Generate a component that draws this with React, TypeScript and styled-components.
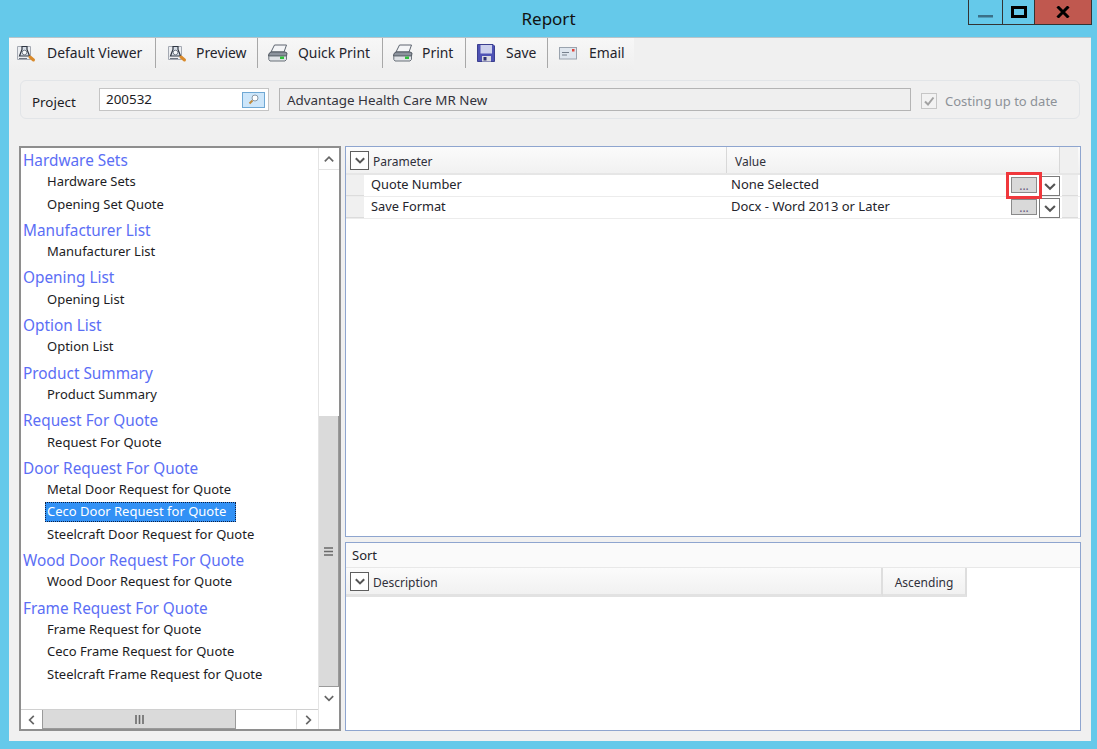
import React from "react";
import styled, { createGlobalStyle } from "styled-components";

const GlobalStyle = createGlobalStyle`
  html, body {
    margin: 0;
    padding: 0;
    background: #65c9ea;
  }
  * {
    box-sizing: border-box;
  }
`;

const Page = styled.div`
  width: 1097px;
  height: 749px;
  display: flex;
  flex-direction: column;
  font-family: "Noto Sans", "Open Sans", sans-serif;
  font-size: 13px;
  color: #1c1c24;
  overflow: hidden;
`;

const TitleBar = styled.div`
  position: relative;
  height: 37px;
  flex: none;
  text-align: center;
  font-size: 17px;
  line-height: 38px;
  color: #111;
`;

const WindowControls = styled.div`
  position: absolute;
  top: 0;
  left: 968px;
  width: 124px;
  height: 25px;
  display: flex;
  border: 1px solid #333;
  border-top: 0;
`;

const ControlButton = styled.div<{ $w: number; $close?: boolean }>`
  width: ${(p) => p.$w}px;
  flex: none;
  display: flex;
  align-items: center;
  justify-content: center;
  background: ${(p) => (p.$close ? "#c0584f" : "transparent")};
  & + & {
    border-left: 1px solid #333;
  }
`;

const Window = styled.div`
  width: 1082px;
  height: 704px;
  margin-left: 9px;
  flex: none;
  background: #f0f0f0;
  border-top: 1px solid #b9c4c9;
  display: flex;
  flex-direction: column;
`;

const Toolbar = styled.div`
  width: 625px;
  height: 32px;
  flex: none;
  display: flex;
  align-items: stretch;
  padding-bottom: 2px;
  background: linear-gradient(#f7f7f7, #efefef);
`;

const ToolButton = styled.div<{ $w: number; $pad: number }>`
  width: ${(p) => p.$w}px;
  flex: none;
  display: flex;
  align-items: center;
  padding-left: ${(p) => p.$pad}px;
  padding-bottom: 1px;
  font-size: 13.9px;
  color: #24242c;
  border-right: 1px solid #a8a8a8;
  &:last-child {
    border-right: 0;
  }
`;

const ToolIcon = styled.span<{ $gap: number }>`
  display: flex;
  margin-right: ${(p) => p.$gap}px;
`;

const ProjectGroup = styled.div`
  height: 39px;
  margin: 10px 11px 0 11px;
  flex: none;
  display: flex;
  align-items: center;
  padding: 0 0 0 11px;
  border: 1px solid #e2e5e8;
  border-radius: 6px;
  font-size: 13.4px;
`;

const ProjectLabel = styled.span`
  width: 67px;
  flex: none;
  padding-top: 4px;
`;

const ProjectInput = styled.div`
  width: 170px;
  height: 23px;
  flex: none;
  display: flex;
  align-items: center;
  justify-content: space-between;
  padding: 0 3px 1px 6px;
  background: #fff;
  border: 1px solid #c4c4c4;
`;

const SearchButton = styled.div`
  width: 23px;
  height: 16px;
  margin-top: 1px;
  display: flex;
  align-items: center;
  justify-content: center;
  background: #cde6fa;
  border: 1px solid #6fa8d4;
`;

const ProjectName = styled.div`
  width: 632px;
  height: 23px;
  margin-left: 10px;
  flex: none;
  padding-left: 7px;
  line-height: 22px;
  background: #efefef;
  border: 1px solid #b4b4b4;
  color: #33333c;
`;

const Costing = styled.div`
  margin-left: 10px;
  display: flex;
  align-items: center;
  gap: 8px;
  padding-top: 2px;
  font-size: 13px;
  color: #8d9298;
`;

const CheckBox = styled.span`
  width: 16px;
  height: 16px;
  display: flex;
  align-items: center;
  justify-content: center;
  background: #f2f2f2;
  border: 1px solid #c6c6c6;
`;

const Body = styled.div`
  height: 585px;
  margin: 27px 10px 0 10px;
  flex: none;
  display: flex;
  gap: 4px;
`;

const ListPanel = styled.div`
  width: 322px;
  flex: none;
  display: grid;
  grid-template-columns: 297px 21px;
  grid-template-rows: 561px 20px;
  border: 2px solid #8e8e8e;
  background: #fff;
`;

const ReportList = styled.div`
  padding-left: 2px;
  overflow: hidden;
`;

const GroupTitle = styled.div`
  height: 25.3px;
  line-height: 25px;
  font-size: 15.35px;
  color: #5b6ef5;
`;

const ReportItem = styled.div`
  height: 22.3px;
  margin-left: 21.5px;
`;

const ItemLabel = styled.div<{ $selected?: boolean }>`
  width: ${(p) => (p.$selected ? "191px" : "auto")};
  height: 20px;
  position: relative;
  top: -1px;
  padding-left: 2.5px;
  line-height: 19px;
  color: ${(p) => (p.$selected ? "#fff" : "#1c1c24")};
  background: ${(p) => (p.$selected ? "#3291f5" : "transparent")};
  outline: ${(p) => (p.$selected ? "1px dotted #102040" : "none")};
  outline-offset: -1px;
`;

const VScroll = styled.div`
  display: flex;
  flex-direction: column;
  background: #fff;
  border-left: 1px solid #e4e4e4;
`;

const ScrollArrow = styled.div`
  height: 21px;
  flex: none;
  display: flex;
  align-items: center;
  justify-content: center;
`;

const VTrack = styled.div`
  height: 247px;
  flex: none;
  border-top: 1px solid #e4e4e4;
`;

const VThumb = styled.div`
  height: 271px;
  flex: none;
  display: flex;
  align-items: center;
  justify-content: center;
  background: #dadada;
  border-bottom: 1px solid #9a9a9a;
  border-right: 1px solid #9a9a9a;
`;

const HScroll = styled.div`
  display: flex;
  align-items: stretch;
  border-top: 1px solid #d0d0d0;
`;

const HArrow = styled.div`
  width: 21px;
  flex: none;
  display: flex;
  align-items: center;
  justify-content: center;
`;

const HThumb = styled.div`
  width: 194px;
  flex: none;
  display: flex;
  align-items: center;
  justify-content: center;
  background: #dadada;
  border-left: 1px solid #9a9a9a;
  border-right: 1px solid #9a9a9a;
  border-bottom: 1px solid #9a9a9a;
`;

const HTrack = styled.div`
  flex: 1;
  border-right: 1px solid #e0e0e0;
`;

const ScrollCorner = styled.div`
  background: #fff;
  border-left: 1px solid #e4e4e4;
`;

const RightColumn = styled.div`
  flex: 1;
  display: flex;
  flex-direction: column;
  gap: 5px;
  min-width: 0;
`;

const ParamGrid = styled.div`
  height: 391px;
  flex: none;
  background: #fff;
  border: 1px solid #8ea5cf;
`;

const HeaderRow = styled.div`
  height: 28px;
  display: flex;
  background: linear-gradient(#fbfbfb, #f1f1f1);
  border-bottom: 2px solid #e6e6e6;
`;

const HeaderCell = styled.div<{ $w: number }>`
  width: ${(p) => p.$w}px;
  flex: none;
  display: flex;
  align-items: center;
  font-size: 12px;
  padding: 2px 0 0 4px;
  gap: 4px;
  border-right: 1px solid #d8d8d8;
  color: #30303a;
`;

const ValueHeader = styled(HeaderCell)`
  padding-left: 8px;
`;

const FilterBox = styled.span`
  width: 19px;
  height: 19px;
  margin-top: -2px;
  flex: none;
  display: flex;
  align-items: center;
  justify-content: center;
  background: #fff;
  border: 1px solid #5e5e5e;
`;

const HeaderEnd = styled.div`
  flex: 1;
  margin-right: 2px;
  background: #f0f0f0;
`;

const ParamRow = styled.div`
  height: 22px;
  display: flex;
  align-items: flex-start;
  border-bottom: 1px solid #ececec;
  line-height: 19px;
`;

const RowHandle = styled.span`
  width: 18px;
  height: 100%;
  flex: none;
  background: #f0f0f0;
  border-bottom: 1px solid #dcdcdc;
`;

const ParamName = styled.span`
  width: 366px;
  flex: none;
  padding-left: 7px;
  font-size: 12.8px;
  color: #24242c;
`;

const ParamValue = styled.span`
  width: 281px;
  flex: none;
  padding-left: 1px;
  font-size: 13px;
  color: #24242c;
`;

const EllipsisCell = styled.span<{ $marked?: boolean }>`
  position: relative;
  width: 26px;
  height: 16px;
  margin-top: 2px;
  flex: none;
  display: flex;
  align-items: flex-end;
  justify-content: center;
  font-size: 12px;
  line-height: 12px;
  color: #6a5a80;
  background: #d9d9d9;
  border: 1px solid #8a8a8a;
  ${(p) =>
    p.$marked &&
    `&::after {
      content: "";
      position: absolute;
      left: -6px;
      top: -6px;
      width: 30px;
      height: 21px;
      border: 3px solid #f0383c;
    }`}
`;

const DropButton = styled.span`
  width: 21px;
  height: 20px;
  margin: 1px 0 0 2px;
  flex: none;
  display: flex;
  align-items: center;
  justify-content: center;
  background: #fff;
  border: 1px solid #7a7a7a;
`;

const RowEnd = styled.span`
  flex: 1;
  height: 100%;
  margin: 0 2px;
  background: #f0f0f0;
  border-bottom: 1px solid #dcdcdc;
`;

const SortPanel = styled.div`
  flex: 1;
  background: #fff;
  border: 1px solid #8ea5cf;
`;

const SortTitle = styled.div`
  height: 25px;
  padding-left: 6px;
  line-height: 24px;
  font-size: 13px;
  background: #fafafa;
  border-bottom: 1px solid #e8e8e8;
  color: #24242c;
`;

const SortHeader = styled.div`
  height: 29px;
  display: flex;
`;

const SortCell = styled.div<{ $w: number; $center?: boolean }>`
  width: ${(p) => p.$w}px;
  flex: none;
  display: flex;
  align-items: center;
  justify-content: ${(p) => (p.$center ? "center" : "flex-start")};
  gap: 4px;
  padding-top: 2px;
  padding-left: ${(p) => (p.$center ? 0 : 4)}px;
  font-size: 12px;
  color: #30303a;
  background: linear-gradient(#fbfbfb, #f1f1f1);
  border-right: 2px solid #dedede;
  border-bottom: 3px solid #e2e2e2;
`;

const Chevron = ({ dir, size = 12, color = "#666", width = 1.4 }: { dir: "up" | "down" | "left" | "right"; size?: number; color?: string; width?: number }) => {
  const pts = {
    up: "1.5,7 5,3.5 8.5,7",
    down: "1.5,3.5 5,7 8.5,3.5",
    left: "6.5,1.5 3,5 6.5,8.5",
    right: "3.5,1.5 7,5 3.5,8.5",
  }[dir];
  return (
    <svg width={size} height={size} viewBox="0 0 10 10">
      <polyline points={pts} fill="none" stroke={color} strokeWidth={width} />
    </svg>
  );
};

const GripV = () => (
  <svg width="9" height="9" viewBox="0 0 9 9">
    <path d="M0 1h9M0 4.5h9M0 8h9" stroke="#6a6a6a" strokeWidth="1.6" />
  </svg>
);

const GripH = () => (
  <svg width="9" height="9" viewBox="0 0 9 9">
    <path d="M1 0v9M4.5 0v9M8 0v9" stroke="#6a6a6a" strokeWidth="1.6" />
  </svg>
);

const PreviewIcon = () => (
  <svg width="20" height="20" viewBox="0 0 20 20">
    <path d="M1.500 3.500h13v13h-13z" fill="#eceef1" stroke="#a4a9b2" />
    <path d="M3 15.500h8" stroke="#6d7480" strokeWidth="1" />
    <path d="M6 3.500h5v3l2.500 6.500h-10l2.500-6.500z" fill="#d6dde6" stroke="#2f3642" strokeWidth="1.200" />
    <circle cx="8.500" cy="9.500" r="2.300" fill="#f7f9fb" stroke="#59636f" strokeWidth=".8" />
    <path d="M14 14l3.500 3" stroke="#d98a2b" strokeWidth="3" strokeLinecap="round" />
  </svg>
);

const PrinterIcon = () => (
  <svg width="20" height="18" viewBox="0 0 20 18">
    <path d="M6.500 1h12l-2.500 7h-13z" fill="#f4f5f7" stroke="#5e6570" />
    <path d="M3 8h14l2 1-.5 3h-18l.5-2.500z" fill="#8c939d" stroke="#515861" />
    <path d="M.8 12h17.700v3.500l-1.500 1.500h-15l-1.200-1.500z" fill="#dfe2e6" stroke="#6b727b" />
    <rect x="12" y="12.500" width="4" height="2.500" fill="#2fbe3b" />
  </svg>
);

const SaveIcon = () => (
  <svg width="18" height="18" viewBox="0 0 18 18">
    <path d="M.5.5h15.500l1.500 1.500v15.500H.5z" fill="#4e52b4" stroke="#3b3f8f" />
    <rect x="3.500" y="1" width="11.500" height="8.500" fill="#ccd0ec" />
    <rect x="5" y="12" width="9" height="5.500" fill="#d9dae0" />
    <rect x="6.500" y="13" width="3" height="3.500" fill="#2d3070" />
  </svg>
);

const EmailIcon = () => (
  <svg width="18" height="14" viewBox="0 0 18 14">
    <rect x=".5" y="1.500" width="17" height="11.500" fill="#dfe6ee" stroke="#9aa3ae" />
    <path d="M3 6.500h7M3 9h5" stroke="#76808d" />
    <rect x="13" y="3" width="2.500" height="2.500" fill="#e0453a" />
  </svg>
);

const SearchGlyph = () => (
  <svg width="13" height="13" viewBox="0 0 13 13">
    <circle cx="8" cy="5" r="3" fill="#fff" stroke="#8a99a8" />
    <path d="M5.500 7.500l-3 3" stroke="#c08a3a" strokeWidth="2" />
  </svg>
);

const CheckGlyph = () => (
  <svg width="12" height="12" viewBox="0 0 12 12">
    <polyline points="2,6.500 5,9.500 10.500,2.500" fill="none" stroke="#a2a2a2" strokeWidth="2" />
  </svg>
);

const tools = [
  { label: "Default Viewer", w: 147, pad: 7, gap: 11, icon: <PreviewIcon /> },
  { label: "Preview", w: 102, pad: 11, gap: 9, icon: <PreviewIcon /> },
  { label: "Quick Print", w: 125, pad: 10, gap: 10, icon: <PrinterIcon /> },
  { label: "Print", w: 83, pad: 10, gap: 9, icon: <PrinterIcon /> },
  { label: "Save", w: 82, pad: 11, gap: 11, icon: <SaveIcon /> },
  { label: "Email", w: 86, pad: 11, gap: 12, icon: <EmailIcon /> },
];

const groups = [
  { title: "Hardware Sets", items: ["Hardware Sets", "Opening Set Quote"] },
  { title: "Manufacturer List", items: ["Manufacturer List"] },
  { title: "Opening List", items: ["Opening List"] },
  { title: "Option List", items: ["Option List"] },
  { title: "Product Summary", items: ["Product Summary"] },
  { title: "Request For Quote", items: ["Request For Quote"] },
  {
    title: "Door Request For Quote",
    items: ["Metal Door Request for Quote", "Ceco Door Request for Quote", "Steelcraft Door Request for Quote"],
  },
  { title: "Wood Door Request For Quote", items: ["Wood Door Request for Quote"] },
  {
    title: "Frame Request For Quote",
    items: ["Frame Request for Quote", "Ceco Frame Request for Quote", "Steelcraft Frame Request for Quote"],
  },
];

const params = [
  { name: "Quote Number", value: "None Selected", marked: true },
  { name: "Save Format", value: "Docx - Word 2013 or Later", marked: false },
];

export default function App() {
  return (
    <Page>
      <GlobalStyle />
      <TitleBar>
        Report
        <WindowControls>
          <ControlButton $w={33}>
            <svg width="16" height="12" viewBox="0 0 16 12">
              <rect x="0" y="9" width="15" height="2.500" fill="#3a7088" />
            </svg>
          </ControlButton>
          <ControlButton $w={32}>
            <svg width="16" height="12" viewBox="0 0 16 12">
              <rect x="1.500" y="1.500" width="13" height="9" fill="none" stroke="#000" strokeWidth="3" />
            </svg>
          </ControlButton>
          <ControlButton $w={57} $close>
            <svg width="14" height="12" viewBox="0 0 14 12">
              <path d="M1.500 0.500l11 11M12.500 0.500l-11 11" stroke="#000" strokeWidth="3" />
            </svg>
          </ControlButton>
        </WindowControls>
      </TitleBar>
      <Window>
        <Toolbar>
          {tools.map((t) => (
            <ToolButton key={t.label} $w={t.w} $pad={t.pad}>
              <ToolIcon $gap={t.gap}>{t.icon}</ToolIcon>
              {t.label}
            </ToolButton>
          ))}
        </Toolbar>
        <ProjectGroup>
          <ProjectLabel>Project</ProjectLabel>
          <ProjectInput>
            200532
            <SearchButton>
              <SearchGlyph />
            </SearchButton>
          </ProjectInput>
          <ProjectName>Advantage Health Care MR New</ProjectName>
          <Costing>
            <CheckBox>
              <CheckGlyph />
            </CheckBox>
            Costing up to date
          </Costing>
        </ProjectGroup>
        <Body>
          <ListPanel>
            <ReportList>
              {groups.map((g) => (
                <React.Fragment key={g.title}>
                  <GroupTitle>{g.title}</GroupTitle>
                  {g.items.map((item) => (
                    <ReportItem key={item}>
                      <ItemLabel $selected={item === "Ceco Door Request for Quote"}>{item}</ItemLabel>
                    </ReportItem>
                  ))}
                </React.Fragment>
              ))}
            </ReportList>
            <VScroll>
              <ScrollArrow>
                <Chevron dir="up" />
              </ScrollArrow>
              <VTrack />
              <VThumb>
                <GripV />
              </VThumb>
              <ScrollArrow>
                <Chevron dir="down" />
              </ScrollArrow>
            </VScroll>
            <HScroll>
              <HArrow>
                <Chevron dir="left" />
              </HArrow>
              <HThumb>
                <GripH />
              </HThumb>
              <HTrack />
              <HArrow>
                <Chevron dir="right" />
              </HArrow>
            </HScroll>
            <ScrollCorner />
          </ListPanel>
          <RightColumn>
            <ParamGrid>
              <HeaderRow>
                <HeaderCell $w={381}>
                  <FilterBox>
                    <Chevron dir="down" color="#555" width={1.7} />
                  </FilterBox>
                  Parameter
                </HeaderCell>
                <ValueHeader $w={333}>Value</ValueHeader>
                <HeaderEnd />
              </HeaderRow>
              {params.map((p) => (
                <ParamRow key={p.name}>
                  <RowHandle />
                  <ParamName>{p.name}</ParamName>
                  <ParamValue>{p.value}</ParamValue>
                  <EllipsisCell $marked={p.marked}>...</EllipsisCell>
                  <DropButton>
                    <Chevron dir="down" size={14} color="#555" width={1.5} />
                  </DropButton>
                  <RowEnd />
                </ParamRow>
              ))}
            </ParamGrid>
            <SortPanel>
              <SortTitle>Sort</SortTitle>
              <SortHeader>
                <SortCell $w={537}>
                  <FilterBox>
                    <Chevron dir="down" color="#555" width={1.7} />
                  </FilterBox>
                  Description
                </SortCell>
                <SortCell $w={84} $center>
                  Ascending
                </SortCell>
              </SortHeader>
            </SortPanel>
          </RightColumn>
        </Body>
      </Window>
    </Page>
  );
}
